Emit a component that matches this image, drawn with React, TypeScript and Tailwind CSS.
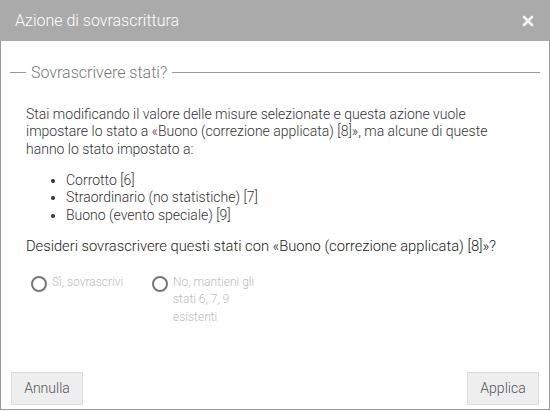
import React from "react";

function Radio({ label, className }: { label: React.ReactNode; className?: string }) {
  return (
    <div className={"flex items-start " + (className ?? "")}>
      <span className="mt-[2px] ml-[5px] mr-[5px] w-[16px] h-[16px] shrink-0 rounded-full border-2 border-[#777]" />
      <span className="text-[12px] leading-[17.5px] text-[#bbb]">{label}</span>
    </div>
  );
}

export default function App() {
  return (
    <div
      className="w-[550px] h-[410px] bg-white flex flex-col"
      style={{ fontFamily: "Roboto, 'Liberation Sans', sans-serif" }}
    >
      <div className="h-[41px] bg-[#aaaaaa] flex items-center justify-between pl-[15px] pr-[16px] shrink-0">
        <span className="text-[16px] font-light text-white">Azione di sovrascrittura</span>
        <svg width="12" height="12" viewBox="0 0 12 12" className="mt-[1px]">
          <path d="M2 2 L10 10 M10 2 L2 10" stroke="#f4f4f4" strokeWidth="2.6" strokeLinecap="round" />
        </svg>
      </div>
      <div className="flex-1 flex flex-col border-x border-b border-[#999]">
        <div className="mx-[9px] mt-[22px] flex items-center">
          <span className="w-[16px] h-px bg-[#999]" />
          <span className="px-[5px] text-[16px] font-light leading-[19px] text-[#777]">Sovrascrivere stati?</span>
          <span className="flex-1 h-px bg-[#999]" />
        </div>
        <div className="pl-[25px] mt-[23.5px] text-[14px] leading-[17.5px] text-[#333] font-light">
          <p className="whitespace-nowrap">
            <span className="block">Stai modificando il valore delle misure selezionate e questa azione vuole</span>
            <span className="block">impostare lo stato a «Buono (correzione applicata) [8]», ma alcune di queste</span>
            <span className="block">hanno lo stato impostato a:</span>
          </p>
          <ul className="list-disc pl-[40px] mt-[13.5px]">
            <li>Corrotto [6]</li>
            <li>Straordinario (no statistiche) [7]</li>
            <li>Buono (evento speciale) [9]</li>
          </ul>
          <p className="mt-[13px] whitespace-nowrap text-[14.7px] leading-[18.5px] text-[#222]">
            Desideri sovrascrivere questi stati con «Buono (correzione applicata) [8]»?
          </p>
          <div className="flex mt-[18px]">
            <Radio className="w-[121px]" label="Sì, sovrascrivi" />
            <Radio className="w-[120px]" label={<>No, mantieni gli<br />stati 6, 7, 9<br />esistenti</>} />
          </div>
        </div>
        <div className="mt-auto flex justify-between px-[10px] pb-[4px]">
          <button className="h-[33px] w-[72px] bg-[#eeeeee] border border-[#dddddd] text-[14px] text-[#555] font-light">
            Annulla
          </button>
          <button className="h-[33px] w-[72px] bg-[#eeeeee] border border-[#dddddd] text-[14px] text-[#555] font-light">
            Applica
          </button>
        </div>
      </div>
    </div>
  );
}
